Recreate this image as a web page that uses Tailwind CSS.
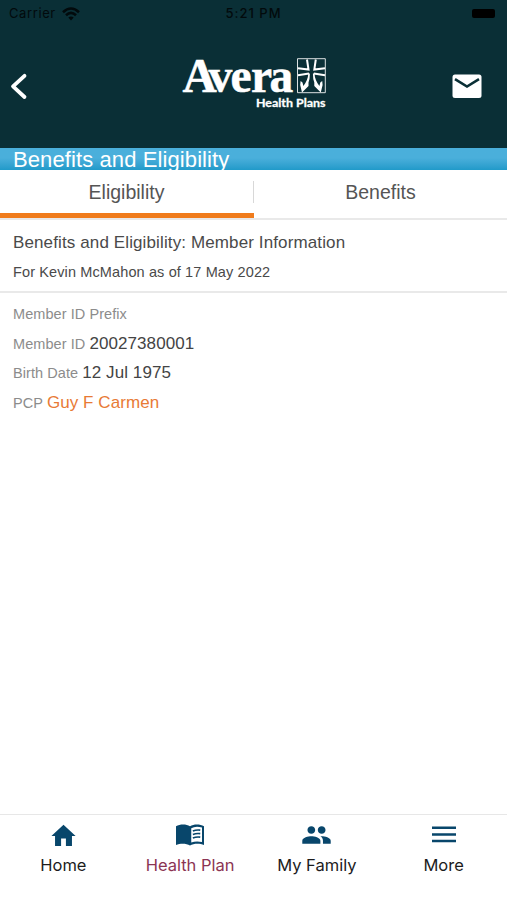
<!DOCTYPE html>
<html lang="en">
<head>
<meta charset="utf-8">
<title>Benefits and Eligibility</title>
<script src="https://cdn.jsdelivr.net/npm/@tailwindcss/browser@4"></script>
</head>
<body class="bg-white">
<div class="flex flex-col w-[507px] h-[900px] overflow-hidden bg-white font-['Liberation_Sans',sans-serif] text-[#4a4a4a]">
  <header class="h-[148px] shrink-0 bg-[#0a2f36]">
    <div class="grid grid-cols-3 items-center h-[27px] pl-[9px] pr-[12px] font-[Inter,sans-serif] text-[#020a0c] text-[13px]">
      <div class="flex items-center gap-[6px]">
        <span class="tracking-[0.6px]">Carrier</span>
        <svg class="w-[18px] h-[14px]" viewBox="0 0 18 14" fill="none" stroke="currentColor" stroke-width="2.6"><path d="M1 5.2Q9-2.2 17 5.2M4 8.2Q9 3.6 14 8.2"/><path d="M6.3 10.6Q9 8.2 11.7 10.6L9 13.4Z" fill="currentColor" stroke="none"/></svg>
      </div>
      <div class="text-center font-medium tracking-[1px] pl-[3px]">5:21 PM</div>
      <div class="justify-self-end w-[23px] h-[9px] rounded-[2px] bg-black"></div>
    </div>
    <div class="flex pl-[10px] h-[90px]">
      <svg class="w-[18px] h-[27px] mt-[46px]" viewBox="0 0 18 27" fill="none" stroke="#fff" stroke-width="3.8" stroke-linecap="round" stroke-linejoin="round"><path d="M14.500 2.800L3 13.300L14.500 24"/></svg>
      <svg class="w-[150px] h-[60px] mt-[26px] ml-[152px]" viewBox="180 53 150 60" fill="#fff">
        <text x="182.500 208.500 230.500 251 269.500" y="92" font-family="'Liberation Serif',serif" font-weight="700" font-size="47.500" stroke="#fff" stroke-width=".5">Avera</text>
        <text x="256" y="107.300" font-family="Lato,sans-serif" font-weight="700" font-size="12" textLength="69.500" lengthAdjust="spacingAndGlyphs" stroke="#fff" stroke-width=".3">Health Plans</text>
        <g fill="none" stroke="#fff">
          <path stroke-width="1" stroke-opacity=".85" d="M297.500 58.700h27.800v34h-27.800z"/>
          <path stroke-width="2" d="M307 59.500L308.500 69.500L298 68.200M315.800 59.500L314.300 69.500L325 68.200M298 75.300L309 73.600M325 75.300L313.800 73.600"/>
        </g>
        <path d="M308.300 73.500H309.900Q309.900 79 308.500 82.500V86L302 92.500L300.200 85L300.600 81L302.500 82.500L303.400 86Q308 80 308.300 73.500ZM314.500 73.500H312.900Q312.900 79 314.300 82.500V86L320.800 92.500L322.600 85L322.200 81L320.300 82.500L319.400 86Q314.800 80 314.500 73.500Z"/>
      </svg>
      <svg class="w-[30px] h-[24px] mt-[47px] ml-[122px]" viewBox="0 0 30 24"><rect x=".5" y=".5" width="29" height="23.5" rx="2.500" fill="#fff"/><path d="M3 5.200L15 12.500L27 5.200" fill="none" stroke="#0a2f36" stroke-width="2.600"/></svg>
    </div>
  </header>
  <h1 class="h-[22px] shrink-0 bg-gradient-to-b from-[#4aafdb] from-45% to-[#209ac9] pl-[13px] text-[22px] leading-[24px] tracking-[0.1px] text-white whitespace-nowrap">Benefits and Eligibility</h1>
  <nav class="relative flex h-[50px] shrink-0 border-b-2 border-[#e9e9e9] text-[19.5px] text-[#555]">
    <div class="flex-1 text-center leading-[45px]">Eligibility</div>
    <div class="w-px h-[22px] mt-[11px] bg-[#d8d8d8]"></div>
    <div class="flex-1 text-center leading-[45px]">Benefits</div>
    <div class="absolute left-0 top-[43px] w-[254px] h-[5px] bg-[#f07c1c]"></div>
  </nav>
  <section class="h-[73px] shrink-0 border-b-2 border-[#e9e9e9] pl-[13px] pt-[9px] whitespace-nowrap">
    <h2 class="text-[17px] leading-[28px] tracking-[0.12px]">Benefits and Eligibility: Member Information</h2>
    <p class="text-[14.5px] leading-[31px] tracking-[0.12px]">For Kevin McMahon as of 17 May 2022</p>
  </section>
  <section class="flex-1 pl-[13px] pt-[7px] text-[14.5px] leading-[29.2px] text-[#8c8c8c] whitespace-nowrap tracking-[0.07px]">
    <div class="h-[29.2px]"><span>Member ID Prefix</span></div>
    <div class="h-[29.2px]"><span>Member ID</span> <span class="text-[17px] text-[#444]">20027380001</span></div>
    <div class="h-[29.2px]"><span>Birth Date</span> <span class="text-[17px] text-[#444]">12 Jul 1975</span></div>
    <div class="h-[29.2px]"><span>PCP</span> <span class="text-[17px] text-[#e87a35]">Guy F Carmen</span></div>
  </section>
  <footer class="grid grid-cols-4 h-[86px] shrink-0 border-t border-[#e7e7e7] font-[Inter,sans-serif] text-[16.5px] leading-[24px] text-[#1c1c1c] whitespace-nowrap">
    <div class="flex flex-col items-center pt-[5px]">
      <svg class="w-[29px] h-[30px] translate-y-px" viewBox="0 0 24 24" preserveAspectRatio="none" fill="#08466b"><path d="M10 20v-6h4v6h5v-8h3L12 3 2 12h3v8z"/></svg><span class="mt-[3px]">Home</span>
    </div>
    <div class="flex flex-col items-center pt-[5px] text-[#8c3453]">
      <svg class="w-[30px] h-[30px]" viewBox="0 0 24 24" fill="#08466b"><path fill-rule="evenodd" d="M12 5C9 3.200 4 3.200 .8 5V20C4 18.500 9 18.500 12 20.300C15 18.500 20 18.500 23.200 20V5C20 3.200 15 3.200 12 5ZM21.600 6Q16.500 4.500 13 6.600V18Q16.500 16.500 21.600 17.500Z"/><path d="M14.300 8.800q2.800-1.200 5.900-.7M14.300 11.600q2.800-1.200 5.900-.7M14.300 14.400q2.800-1.200 5.900-.7" fill="none" stroke="#08466b" stroke-width="1.300"/></svg><span class="mt-[3px]">Health Plan</span>
    </div>
    <div class="flex flex-col items-center pt-[5px]">
      <svg class="w-[31px] h-[30px]" viewBox="0 0 24 24" preserveAspectRatio="none" fill="#08466b"><path d="M16 11c1.660 0 2.990-1.340 2.990-3S17.660 5 16 5c-1.660 0-3 1.340-3 3s1.340 3 3 3zm-8 0c1.660 0 2.990-1.340 2.990-3S9.660 5 8 5C6.340 5 5 6.340 5 8s1.340 3 3 3zm0 2c-2.330 0-7 1.170-7 3.500V19h14v-2.500c0-2.330-4.670-3.500-7-3.500zm8 0c-.29 0-.62.020-.97.050 1.160.84 1.970 1.970 1.970 3.450V19h6v-2.500c0-2.330-4.670-3.500-7-3.500z"/></svg><span class="mt-[3px]">My Family</span>
    </div>
    <div class="flex flex-col items-center pt-[5px]">
      <svg class="w-[24px] h-[30px]" viewBox="0 0 24 30" fill="#08466b"><path d="M0 6.500h24v2.500H0zM0 13.200h24v2.500H0zM0 19.800h24v2.500H0z"/></svg><span class="mt-[3px]">More</span>
    </div>
  </footer>
</div>
</body>
</html>
